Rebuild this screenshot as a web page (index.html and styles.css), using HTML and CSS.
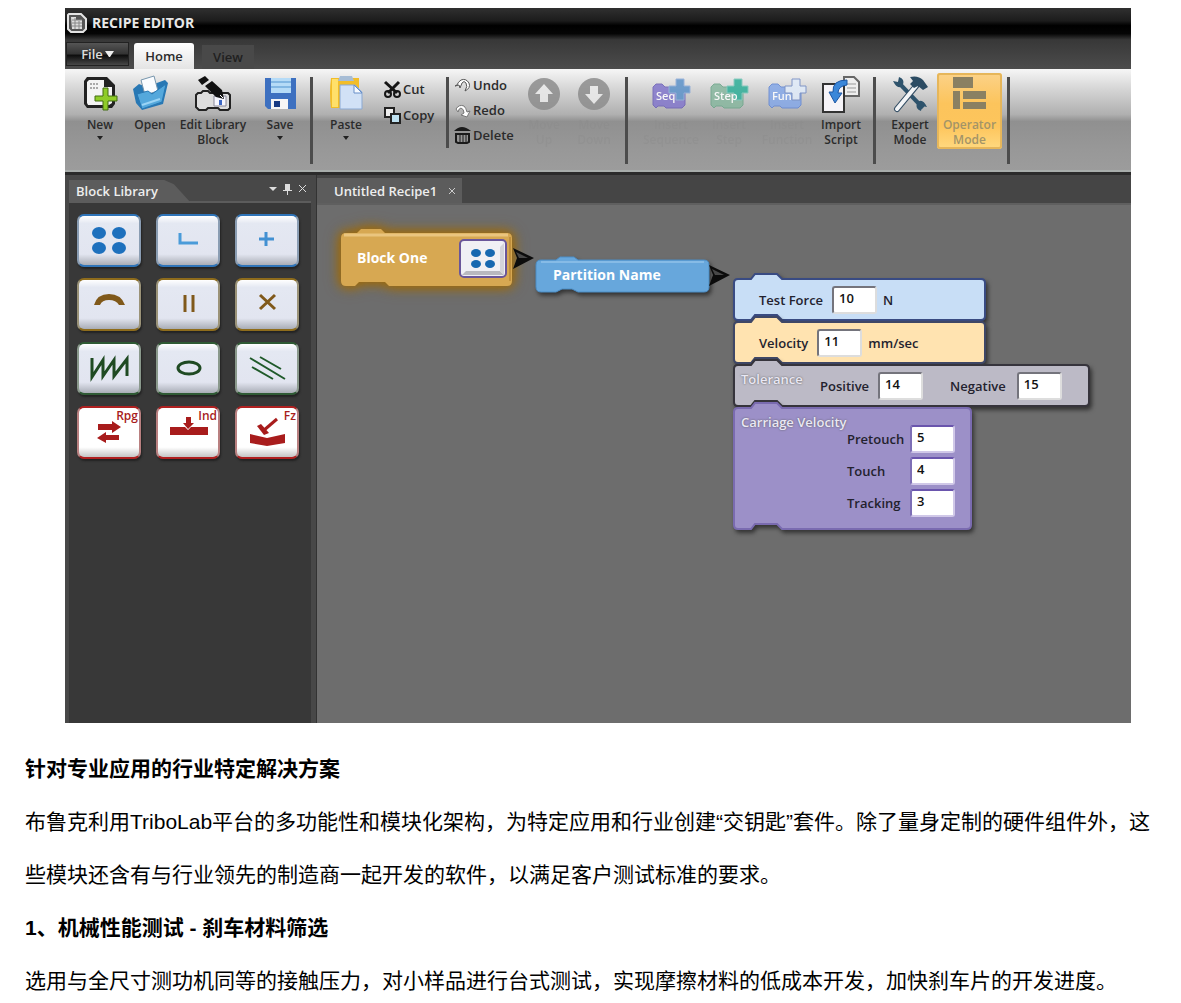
FILE: index.html
```html
<!DOCTYPE html>
<html lang="zh-CN">
<head>
<meta charset="utf-8">
<meta name="viewport" content="width=device-width, initial-scale=1">
<title>TriboLab</title>
<link rel="stylesheet" href="styles.css">
</head>
<body>
<main class="article">
<figure class="app">
  <header class="titlebar">
    <svg width="20" height="20" viewBox="0 0 20 20"><path d="M2 1h12l5 5v10l-3 3H4l-3-3V2z" fill="#555" stroke="#e4e4e4" stroke-width="2"/><path d="M4 4h5v3h6v9H5z" fill="#ddd"/><path d="M5 7h10M5 10h10M5 13h10M8 5v11M12 8v8" stroke="#888"/></svg>
    <span>RECIPE EDITOR</span>
  </header>
  <nav class="tabs">
    <button class="tab file">File<svg width="9" height="6" viewBox="0 0 9 6"><path d="M0 0h9L5 6H4z" fill="#eee"/></svg></button>
    <button class="tab home">Home</button>
    <button class="tab view">View</button>
  </nav>
  <div class="ribbon">
    <button class="tool w50">
      <svg width="36" height="34" viewBox="0 0 36 34"><path d="M5 1h20l8 8v19l-3 4H5l-3-4V5z" fill="#222"/><path d="M7 4h15v7h8v16l-3 2H6l-1-2V6z" fill="#f4f4f4"/><path d="M8 8h9M8 12h9" stroke="#aaa" stroke-width="2" stroke-dasharray="2 1"/><path d="M21 12h5v8h9v5h-9v9h-5v-9h-8v-5h8z" fill="#8fcc28" stroke="#426d12"/></svg>
      <span>New</span><i class="caret"></i>
    </button>
    <button class="tool w50">
      <svg width="36" height="34" viewBox="0 0 36 34"><path d="M1 13l6-5 7 3 19-7 3 3-5 21-21 6-6-7z" fill="#2878b4"/><path d="M9 4l13-4 4 15-13 4z" fill="#fafcff" stroke="#7796ad"/><path d="M5 18l11-3 4 3 14-10-4 18-20 7z" fill="#54a8dc" stroke="#2878b4"/><path d="M10 29l18-6" stroke="#9bd4f5" stroke-width="2"/></svg>
      <span>Open</span>
    </button>
    <button class="tool w76">
      <svg width="38" height="36" viewBox="0 0 38 36"><path d="M4 17h3l2-2h5l2 2h18l2 2v13l-2 2h-8l-2-2H14l-2 2H5l-3-3V19z" fill="#ddd" stroke="#222" stroke-width="2"/><path d="M20 20h12v10H20z" fill="#f7f7ff" stroke="#889"/><path d="M25 24h3v5h-3z" fill="#3d68c4"/><path d="M4 4l7-4 4 4-7 5zM11 10l7-5 10 9 2 9-8-2z" fill="#111"/><path d="M26 19l3 3" stroke="#fff"/></svg>
      <span>Edit Library<br>Block</span>
    </button>
    <button class="tool w58">
      <svg width="34" height="34" viewBox="0 0 34 34"><path d="M2 2h31v31H5l-3-3z" fill="#3d70c0"/><path d="M8 2h20v15H8z" fill="#b5dbf7"/><path d="M8 6h20M8 11h20" stroke="#82b7e3" stroke-width="2"/><path d="M8 23h17v10H8z" fill="#f6f6f6"/><path d="M11 25h6v6h-6z" fill="#173a83"/></svg>
      <span>Save</span><i class="caret"></i>
    </button>
    <hr class="rule after-file">
    <button class="tool w64">
      <svg width="36" height="34" viewBox="0 0 36 34"><path d="M3 2h28v30H3q-2-15 0-30z" fill="#f2bd28"/><path d="M4 3h6v28H4z" fill="#ffe06a"/><path d="M12 0h12l2 5H10z" fill="#a7bdd5"/><path d="M12 9h15l7 7v17H12z" fill="#d1e1f6" stroke="#8ba9d3"/><path d="M26 9v8h8z" fill="#f6faff" stroke="#688fc8"/></svg>
      <span>Paste</span><i class="caret"></i>
    </button>
    <div class="list clip">
      <button class="mini"><svg width="17" height="17" viewBox="0 0 17 17"><path d="M1 1l12 11M15 1L4 12" stroke="#151515" stroke-width="3"/><circle cx="4" cy="13" r="3" fill="none" stroke="#151515" stroke-width="2"/><circle cx="13" cy="13" r="3" fill="none" stroke="#151515" stroke-width="2"/></svg>Cut</button>
      <button class="mini"><svg width="17" height="17" viewBox="0 0 17 17"><path d="M1 1h9v9H1z" fill="#eee" stroke="#222" stroke-width="2"/><path d="M7 7h9v9H7z" fill="#bfe2f2" stroke="#222" stroke-width="2"/></svg>Copy</button>
    </div>
    <hr class="rule short">
    <div class="list edit">
      <button class="mini"><svg width="17" height="15" viewBox="0 0 17 15"><path d="M1 8l4-1 1 3 2-5q2-3 4 0 2 3-1 8 6-3 4-8-3-5-8-3-3 2-4 5z" fill="#fff" stroke="#555"/></svg>Undo</button>
      <button class="mini"><svg width="17" height="15" viewBox="0 0 17 15"><path d="M2 6q3-5 8-3 2 2 3 6l3-1-3 6-6-2 3-2q0-4-3-5-2 0-3 4z" fill="#fff" stroke="#777"/></svg>Redo</button>
      <button class="mini"><svg width="17" height="17" viewBox="0 0 17 17"><path d="M0 4q4-4 8-4t9 4z" fill="#1a1a1a"/><path d="M2 7h13v8l-2 1H4l-2-1z" fill="none" stroke="#1a1a1a" stroke-width="2"/><path d="M6 7v9M9 7v9M12 7v9" stroke="#1a1a1a" stroke-width="1"/></svg>Delete</button>
    </div>
    <button class="tool w50 faint" disabled>
      <svg width="34" height="36" viewBox="0 0 34 36"><circle cx="17" cy="18" r="16" fill="#8d8d8d"/><path d="M17 8l9 10h-5v8h-8v-8H8z" fill="#eaeaea"/></svg>
      <span>Move<br>Up</span>
    </button>
    <button class="tool w50 faint" disabled>
      <svg width="34" height="36" viewBox="0 0 34 36"><circle cx="17" cy="18" r="16" fill="#8d8d8d"/><path d="M17 28l9-10h-5v-8h-8v8H8z" fill="#eaeaea"/></svg>
      <span>Move<br>Down</span>
    </button>
    <hr class="rule after-edit">
    <button class="tool w58 faint" disabled>
      <svg width="38" height="36" viewBox="0 0 38 36"><path d="M1 11l3-3h6l3 3h20v18l-3 3H14l-2-2H6l-2 2-3-3z" fill="#8377cc" stroke="#6c61b5"/><path d="M24 3h8v7h6v7h-6v7h-8v-7h-7v-7h7z" fill="#5c92c9" stroke="#8dabd8"/><text x="4" y="24" class="glyph">Seq</text></svg>
      <span>Insert<br>Sequence</span>
    </button>
    <button class="tool w58 faint" disabled>
      <svg width="38" height="36" viewBox="0 0 38 36"><path d="M1 11l3-3h6l3 3h20v18l-3 3H14l-2-2H6l-2 2-3-3z" fill="#88b79f" stroke="#6da489"/><path d="M24 3h8v7h6v7h-6v7h-8v-7h-7v-7h7z" fill="#2fae98" stroke="#7dc7ba"/><text x="4" y="24" class="glyph">Step</text></svg>
      <span>Insert<br>Step</span>
    </button>
    <button class="tool w58 faint" disabled>
      <svg width="38" height="36" viewBox="0 0 38 36"><path d="M1 11l3-3h6l3 3h20v18l-3 3H14l-2-2H6l-2 2-3-3z" fill="#85a8e8" stroke="#6286d3"/><path d="M24 3h8v7h6v7h-6v7h-8v-7h-7v-7h7z" fill="#e1ecfa" stroke="#7189c2"/><text x="4" y="24" class="glyph">Fun</text></svg>
      <span>Insert<br>Function</span>
    </button>
    <button class="tool w50">
      <svg width="38" height="38" viewBox="0 0 38 38"><path d="M22 1h10l5 5v14H22z" fill="#eee" stroke="#666" stroke-width="2"/><path d="M25 8h9M25 12h9M25 16h9" stroke="#999"/><path d="M1 8h21v28H1z" fill="#f6f4f8" stroke="#333" stroke-width="2"/><path d="M25 4q-15 0-14 12H7l6 11 7-10h-4q0-7 9-8z" fill="#3b87d9" stroke="#1f58a5"/></svg>
      <span>Import<br>Script</span>
    </button>
    <hr class="rule after-insert">
    <button class="tool w54">
      <svg width="36" height="36" viewBox="0 0 36 36"><path d="M6 6l25 26" stroke="#2e536c" stroke-width="4"/><path d="M1 5l5 1 1-5q6 2 4 8-5 6-10-4zM35 31l-5-1-1 5q-6-2-4-8 5-6 10 4z" fill="#2e536c"/><path d="M5 33L25 9" stroke="#365066" stroke-width="6" stroke-linecap="round"/><path d="M5 33L24 10" stroke="#f4f6f8" stroke-width="4" stroke-linecap="round"/><path d="M18 1q8-2 13 3l5 7-5 3-5-4-4 2-4-4 3-3z" fill="#2c4c63"/></svg>
      <span>Expert<br>Mode</span>
    </button>
    <button class="tool w65 active">
      <svg width="34" height="34" viewBox="0 0 34 34"><path d="M0 1h20v11H0zM0 15h7v18H0zM10 15h23v8H10zM10 26h23v7H10z" fill="#8a8062"/></svg>
      <span>Operator<br>Mode</span>
    </button>
    <hr class="rule after-mode">
  </div>
  <div class="workspace">
    <aside class="library">
      <div class="library-head">
        <h2 class="library-title">Block Library</h2>
        <svg class="head-icons" width="38" height="12" viewBox="0 0 38 12"><path d="M0 4h8L4 8z" fill="#ddd"/><path d="M16 1h5v6h2v1h-4v4h-1V8h-4V7h2z" fill="#ddd"/><path d="M30 2l7 7M37 2l-7 7" stroke="#ddd" stroke-width="1"/></svg>
      </div>
      <div class="keys">
        <button class="key blue" aria-label="Dots"><svg viewBox="0 0 64 53"><g fill="#1d70bd"><ellipse cx="22" cy="19" rx="7" ry="6"/><ellipse cx="42" cy="19" rx="7" ry="6"/><ellipse cx="22" cy="34" rx="7" ry="6"/><ellipse cx="42" cy="34" rx="7" ry="6"/></g></svg></button>
        <button class="key blue" aria-label="Corner"><svg viewBox="0 0 64 53"><path d="M24 19v10h18" fill="none" stroke="#4a9bd9" stroke-width="3"/></svg></button>
        <button class="key blue" aria-label="Plus"><svg viewBox="0 0 64 53"><path d="M31 18v14M24 25h15" stroke="#4290d2" stroke-width="3"/></svg></button>
        <button class="key gold" aria-label="Arc"><svg viewBox="0 0 64 53"><path d="M17 27q3-11 15-11t16 11h-6q-3-5-10-5t-9 5z" fill="#80591a"/></svg></button>
        <button class="key gold" aria-label="Bars"><svg viewBox="0 0 64 53"><path d="M29 17v17M37 17v17" stroke="#80591a" stroke-width="3"/></svg></button>
        <button class="key gold" aria-label="Cross"><svg viewBox="0 0 64 53"><path d="M25 17l15 14M40 17L25 31" stroke="#80591a" stroke-width="3"/></svg></button>
        <button class="key green" aria-label="Zigzag"><svg viewBox="0 0 64 53"><path d="M15 16v19l11-17v16l11-16v16l13-17v17" fill="none" stroke="#1f4a22" stroke-width="3"/></svg></button>
        <button class="key green" aria-label="Ellipse"><svg viewBox="0 0 64 53"><ellipse cx="33" cy="26" rx="11" ry="6" fill="none" stroke="#1f4a22" stroke-width="3"/></svg></button>
        <button class="key green" aria-label="Lines"><svg viewBox="0 0 64 53"><path d="M15 16l35 21M25 15l21 12M17 25l21 12" stroke="#1f5a2a" stroke-width="2"/></svg></button>
        <button class="key red"><svg viewBox="0 0 64 53"><path d="M21 18h14v-3l9 6-9 6v-3H21zM42 29H29v-3l-9 6 9 5v-3h13z" fill="#a81c1c"/></svg><span>Rpg</span></button>
        <button class="key red"><svg viewBox="0 0 64 53"><path d="M14 21h15l3 3 3-3h17v8H14z" fill="#a81c1c"/><path d="M30 11h5v6h3l-6 6-5-6h3z" fill="#a81c1c"/></svg><span>Ind</span></button>
        <button class="key red"><svg viewBox="0 0 64 53"><path d="M15 28l17 4 18-4v9l-18 3-17-3z" fill="#a81c1c"/><path d="M42 13L28 25" stroke="#a81c1c" stroke-width="3"/><path d="M22 20l4-2 8 9-5 2z" fill="#a81c1c"/></svg><span>Fz</span></button>
      </div>
    </aside>
    <section class="editor">
      <div class="doc-tabs">
        <div class="doc-tab"><span>Untitled Recipe1</span><button class="close" aria-label="Close"><svg width="8" height="8" viewBox="0 0 8 8"><path d="M1 1l6 6M7 1L1 7" stroke="#ccc"/></svg></button></div>
      </div>
      <div class="canvas">
        <div class="node block-one">
          <svg class="shape glow" width="171" height="54"><path d="M5 0H16L20-4H40L44 0H166q5 0 5 5V48q0 5-5 5H48L44 49H18L14 53H5q-5 0-5-5V5q0-5 5-5z" fill="#d7a852"/><path d="M3 2H167" stroke="#eac57f" stroke-width="3"/><path d="M169 4V48" stroke="#bf8f3d" stroke-width="2"/></svg>
          <span>Block One</span>
          <svg class="chip" width="48" height="39" viewBox="0 0 48 39"><rect x="1" y="1" width="46" height="37" rx="4" fill="#f0f0f4" stroke="#6a5699" stroke-width="2"/><path d="M3 36l4-4h34l4 4z" fill="#b9b9bf"/><path d="M45 4v32l-4-4V8z" fill="#d4d4da"/><g fill="#1668b0"><ellipse cx="17" cy="14" rx="5" ry="4"/><ellipse cx="31" cy="14" rx="5" ry="4"/><ellipse cx="17" cy="25" rx="5" ry="4"/><ellipse cx="31" cy="25" rx="5" ry="4"/></g></svg>
          <svg class="arrow" width="21" height="21" viewBox="0 0 21 21"><path d="M0 0l21 10L0 21l4-11z" fill="#0c0c0c"/><path d="M3 4l12 6H6z" fill="#484848"/></svg>
        </div>
        <div class="node partition">
          <svg class="shape" width="173" height="32"><path d="M5 0H20L24-3H38L42 0H168q5 0 5 5V27q0 5-5 5H42L36 29H26L20 32H5q-5 0-5-5V5q0-5 5-5z" fill="#67a7dc" stroke="#4d8ec6"/><path d="M5 2H168" stroke="#86bbe6" stroke-width="2"/></svg>
          <span>Partition Name</span>
          <svg class="arrow" width="21" height="21" viewBox="0 0 21 21"><path d="M0 0l21 10L0 21l4-11z" fill="#0c0c0c"/><path d="M3 4l12 6H6z" fill="#484848"/></svg>
        </div>
        <div class="node params">
          <div class="param force">
            <svg class="shape" width="252" height="41"><path d="M4 0H17L21-5H43L48 0H247q4 0 4 4V37q0 4-4 4H48L43 36H21L17 41H4q-4 0-4-4V4q0-4 4-4z" fill="#c8def6" stroke="#394b83" stroke-width="2"/></svg>
            <label for="force">Test Force</label><input id="force" value="10"><span>N</span>
          </div>
          <div class="param velocity">
            <svg class="shape" width="252" height="41"><path d="M4 0H17L21-5H43L48 0H247q4 0 4 4V37q0 4-4 4H48L43 36H21L17 41H4q-4 0-4-4V4q0-4 4-4z" fill="#ffe3b0" stroke="#3f4766" stroke-width="2"/></svg>
            <label for="velocity">Velocity</label><input id="velocity" value="11"><span>mm/sec</span>
          </div>
          <div class="param tolerance">
            <svg class="shape" width="356" height="41"><path d="M4 0H17L21-5H43L48 0H351q4 0 4 4V37q0 4-4 4H48L43 36H21L17 41H4q-4 0-4-4V4q0-4 4-4z" fill="#bcbac6" stroke="#36343c" stroke-width="2"/></svg>
            <strong>Tolerance</strong>
            <label for="positive">Positive</label><input id="positive" value="14">
            <label class="negative" for="negative">Negative</label><input id="negative" value="15">
          </div>
          <div class="param carriage">
            <svg class="shape" width="238" height="121"><path d="M4 0H17L21-5H43L48 0H233q4 0 4 4V117q0 4-4 4H48L43 116H21L17 121H4q-4 0-4-4V4q0-4 4-4z" fill="#9c90c8" stroke="#7a6bb0" stroke-width="2"/></svg>
            <strong>Carriage Velocity</strong>
            <div class="fields">
              <label for="pretouch">Pretouch</label><input id="pretouch" value="5">
              <label for="touch">Touch</label><input id="touch" value="4">
              <label for="tracking">Tracking</label><input id="tracking" value="3">
            </div>
          </div>
        </div>
      </div>
    </section>
  </div>
</figure>
<h3>针对专业应用的行业特定解决方案</h3>
<p>布鲁克利用TriboLab平台的多功能性和模块化架构，为特定应用和行业创建“交钥匙”套件。除了量身定制的硬件组件外，这些模块还含有与行业领先的制造商一起开发的软件，以满足客户测试标准的要求。</p>
<h3>1、机械性能测试 - 刹车材料筛选</h3>
<p>选用与全尺寸测功机同等的接触压力，对小样品进行台式测试，实现摩擦材料的低成本开发，加快刹车片的开发进度。</p>
</main>
</body>
</html>
```
FILE: styles.css
```css
* { box-sizing: border-box; }

body {
  margin: 0;
  background: #fff;
  color: #000;
}

.article {
  padding: 8px 25px 0;
  font: 21px/53px "Liberation Sans", "Noto Sans CJK SC", sans-serif;
}

.article h3,
.article p {
  margin: 0;
  font-size: 21px;
  line-height: 53px;
}

/* Application window */
.app {
  margin: 0 25px 19px 40px;
  background: #454545;
  font: 600 13px/16px "Open Sans", sans-serif;
  overflow: hidden;
}

.app button {
  border: 0;
  padding: 0;
  background: none;
  color: #2b2b2b;
  font: 600 12px/15px "Open Sans", sans-serif;
}

.app svg { flex: none; overflow: visible; }

.titlebar {
  display: flex;
  align-items: center;
  gap: 5px;
  height: 32px;
  padding: 0 2px 2px;
  background: linear-gradient(#303030, #1c1c1c 40%, #000 55%, #050505 80%, #3a3a3a);
  color: #e8e8e8;
  font-size: 14px;
  font-weight: 700;
}

.tabs {
  display: flex;
  align-items: flex-end;
  height: 29px;
  padding-left: 1px;
  background: linear-gradient(#383838, #4c4c4c);
}

.app .tab { font-size: 13px; }

.app .file {
  display: flex;
  align-items: center;
  justify-content: center;
  gap: 2px;
  width: 63px;
  height: 24px;
  margin: 0 5px 3px 0;
  border: 1px solid #222;
  background: linear-gradient(#555, #333 50%, #0c0c0c 55%, #484848);
  color: #ddd;
}

.app .home {
  width: 60px;
  height: 26px;
  border-radius: 3px 3px 0 0;
  background: linear-gradient(#fff, #e4e4e4);
}

.app .view {
  width: 52px;
  height: 24px;
  margin-left: 8px;
  background: #494949;
  color: #202020;
}

/* Ribbon */
.ribbon {
  display: flex;
  height: 103px;
  padding: 0 0 0 10px;
  border-bottom: 2px solid #a8adab;
  background: linear-gradient(#f6f6f6, #d5d5d5 20%, #b0b0b0 45%, #909090 52%, #989898 80%, #9c9c9c);
}

.tool {
  display: flex;
  flex: none;
  flex-direction: column;
  align-items: center;
  height: 76px;
  margin-top: 4px;
}

.tool svg { margin-top: 3px; }
.tool span { margin-top: auto; height: 32px; white-space: nowrap; }

.tool .caret { margin-top: -13px; margin-bottom: 9px; }

.caret {
  border: 3px solid transparent;
  border-top: 4px solid #222;
  border-bottom: 0;
}

.app .faint { color: #8a8a8a; }
.faint svg { opacity: .85; }
.faint span { opacity: .35; }

.glyph { fill: #fff; font: 600 11px "Open Sans", sans-serif; }

.app .active {
  border-radius: 3px;
  background: linear-gradient(#fbd288, #fcc45c 40%, #fdc55c 70%, #ffd980);
  box-shadow: inset 0 0 0 2px #e6b65a;
  color: #a39468;
}

.w50 { width: 50px; }
.w54 { width: 54px; }
.w58 { width: 58px; }
.w64 { width: 64px; }
.w65 { width: 65px; }
.w76 { width: 76px; }

.rule {
  flex: none;
  width: 3px;
  height: 87px;
  margin: 8px 0 0;
  border: 0;
  background: #4c4c4c;
}

.short { height: 71px; }
.after-file { margin-left: 1px; margin-right: 1px; }
.after-edit { margin-left: 6px; margin-right: 14px; }
.after-insert { margin-left: 7px; margin-right: 7px; }
.after-mode { margin-left: 5px; }

.list {
  display: flex;
  flex: none;
  flex-direction: column;
  align-items: flex-start;
  height: 75px;
}

.clip { width: 68px; gap: 9px; padding: 12px 0 0 6px; }
.edit { width: 70px; gap: 8px; padding: 8px 0 0 5px; }

.app .mini {
  display: flex;
  align-items: center;
  gap: 2px;
  height: 17px;
  font-size: 13px;
}

/* Workspace */
.workspace {
  display: grid;
  grid-template-columns: 252px 1fr;
  min-height: 551px;
  border-top: 3px solid #2b2b2b;
}

.library {
  display: flex;
  flex-direction: column;
  padding: 5px 5px 0 4px;
  background: #484848;
  border-right: 1px solid #333;
}

.library-head {
  display: flex;
  justify-content: space-between;
  height: 23px;
  border-bottom: 2px solid #5c5c5c;
}

.library-title {
  width: 122px;
  height: 23px;
  margin: 0;
  padding-left: 7px;
  background: #5c5c5c;
  clip-path: polygon(0 0, 78% 0, 86% 18%, 100% 100%, 0 100%);
  color: #eee;
  font-size: 13px;
  font-weight: 600;
  line-height: 23px;
}

.head-icons { margin: 3px 4px 0 0; }

.keys {
  display: grid;
  flex: 1;
  grid-template-columns: repeat(3, 64px);
  grid-auto-rows: 53px;
  gap: 11px 15px;
  padding: 11px 8px;
  background: #383838;
}

.app .key {
  position: relative;
  border: 2px solid;
  border-radius: 7px;
  background: linear-gradient(#fff, #e4e8f2 15%, #e2e5f0 78%, #a9adb6);
  box-shadow: 1px 2px 2px #222;
}

.key svg { position: absolute; inset: -2px; width: 64px; height: 53px; }
.app .blue { border-color: #2f74b8 #8a9db3 #2f74b8; }
.app .gold { border-color: #8e6c1c #9b9378 #8e6c1c; }
.app .green { border-color: #2f5a34 #8a998c #2f5a34; }
.app .red { border-color: #b02020 #b98080 #b02020; background: linear-gradient(#fff 80%, #c4c4c4); color: #a81c1c; }
.key span { position: absolute; top: 0; right: 1px; line-height: 16px; }

.editor { display: flex; flex-direction: column; }

.doc-tabs {
  display: flex;
  align-items: flex-end;
  height: 30px;
  border-bottom: 2px solid #5f5f5f;
}

.doc-tab {
  display: flex;
  align-items: center;
  gap: 11px;
  height: 25px;
  padding: 0 6px 0 17px;
  background: #5c5c5c;
  color: #eee;
}

.close { display: flex; }

.canvas {
  position: relative;
  flex: 1;
  background: #6d6d6d;
}

/* Blocks placed freely on the canvas */
.node { position: absolute; color: #fff; font-size: 14px; font-weight: 700; }
.shape { position: absolute; top: 0; left: 0; z-index: -1; filter: drop-shadow(2px 3px 2px #333); }
.glow { filter: drop-shadow(0 0 6px #9a6a10) drop-shadow(0 0 5px #9a6a10); }
.arrow { position: absolute; left: 100%; }

.block-one,
.partition,
.params,
.param { z-index: 0; }

.block-one {
  display: flex;
  align-items: center;
  justify-content: space-between;
  top: 28px;
  left: 24px;
  width: 172px;
  height: 54px;
  padding: 0 6px 4px 16px;
}

.partition {
  display: flex;
  align-items: center;
  top: 55px;
  left: 219px;
  width: 173px;
  height: 32px;
  padding: 0 0 2px 17px;
}

.params {
  display: flex;
  flex-direction: column;
  gap: 2px;
  top: 74px;
  left: 417px;
  color: #23222e;
  font-size: 13px;
  font-weight: 600;
}

.param {
  position: relative;
  display: flex;
  align-items: center;
  height: 41px;
}

.param input {
  width: 45px;
  height: 28px;
  margin: 0 6px 0 9px;
  padding: 0 0 4px 5px;
  border: 2px solid #74747c;
  border-color: #74747c #ddd #ddd #74747c;
  border-radius: 3px;
  background: #fff;
  color: #111;
  font: 600 13px/16px "Open Sans", sans-serif;
}

.force,
.velocity { width: 252px; padding-left: 25px; }

.tolerance { width: 356px; padding-left: 7px; }

.param strong {
  align-self: flex-start;
  color: #eae8f4;
  font-weight: 600;
  text-shadow: 0 0 2px #555;
}

.tolerance strong { width: 79px; margin-top: 6px; }
.negative { margin-left: 21px; padding-right: 2px; }

.carriage {
  width: 238px;
  height: 121px;
  padding-left: 7px;
}

.carriage strong { width: 106px; margin-top: 6px; white-space: nowrap; }

.fields {
  display: grid;
  grid-template-columns: 54px 1fr;
  gap: 4px 0;
  align-items: center;
  padding-top: 4px;
}

.carriage input { border-color: #6a55ad #d0c8e8 #d0c8e8 #7d6eb5; }
```
